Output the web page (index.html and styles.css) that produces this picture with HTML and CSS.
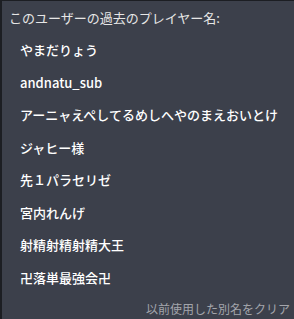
FILE: index.html
```html
<!DOCTYPE html>
<html lang="ja">
<head>
    <meta charset="UTF-8">
    <meta name="viewport" content="width=device-width, initial-scale=1.0">
    <title>過去のプレイヤー名</title>
    <link rel="stylesheet" href="styles.css">
</head>
<body>
    <div id="alias-panel">
        <div class="alias-title">このユーザーの過去のプレイヤー名:</div>
        <ul class="alias-list">
            <li class="alias">やまだりょう</li>
            <li class="alias">andnatu_sub</li>
            <li class="alias">アーニャえぺしてるめしへやのまえおいとけ</li>
            <li class="alias">ジャヒー様</li>
            <li class="alias">先１パラセリゼ</li>
            <li class="alias">宮内れんげ</li>
            <li class="alias">射精射精射精大王</li>
            <li class="alias">卍落単最強会卍</li>
        </ul>
        <div class="alias-footer">
            <button id="clear-button">以前使用した別名をクリア</button>
        </div>
    </div>
</body>
</html>
```

FILE: styles.css
```css
html, body {
    margin: 0;
    height: 100%;
    background-color: #3c404b;
}

#alias-panel {
    box-sizing: border-box;
    height: 319px;
    border-top: 1px solid #1c1e23;
    border-left: 2px solid #1c1e23;
    padding: 8px 0 0 7px;
    font-family: "Noto Sans CJK JP", "Liberation Sans", sans-serif;
    color: #f2f2f2;
}

.alias-title {
    font-size: 13px;
    line-height: 18px;
    color: #e6e6e6;
}

.alias-list {
    list-style: none;
    margin: 7px 0 0 0;
    padding: 0;
}

.alias {
    padding-left: 11px;
    font-size: 13px;
    height: 32.5px;
    line-height: 32.5px;
    font-weight: 500;
    color: #ffffff;
}

.alias-footer {
    display: flex;
    justify-content: flex-end;
    padding: 6px 4px 0 0;
}

#clear-button {
    background: none;
    border: none;
    padding: 0;
    font-family: inherit;
    font-size: 12px;
    color: #a3a5ab;
    cursor: pointer;
}
```
